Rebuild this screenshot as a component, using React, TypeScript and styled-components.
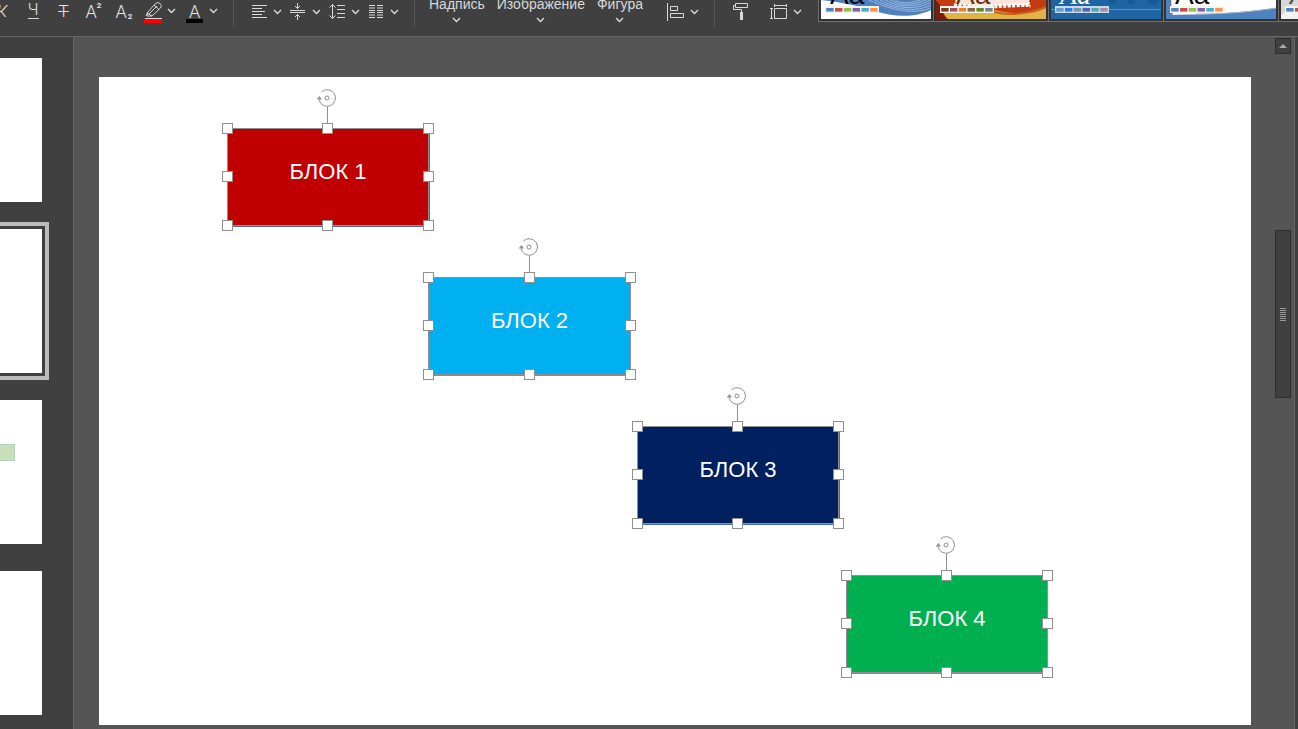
import React from "react";
import styled, { createGlobalStyle } from "styled-components";

const GlobalStyle = createGlobalStyle`
  * { box-sizing: border-box; }
  body {
    margin: 0;
    background: #555555;
    font-family: "Liberation Sans", Arial, sans-serif;
  }
  button { font: inherit; color: inherit; border: 0; padding: 0; background: none; }
`;

const Window = styled.div`
  display: flex;
  flex-direction: column;
  min-height: 100vh;
  overflow: hidden;
`;

const Toolbar = styled.header`
  display: flex;
  align-items: flex-end;
  height: 37px;
  overflow: hidden;
  background: #404040;
  border-bottom: 1px solid #666666;
  color: #d9d9d9;
`;

const Group = styled.div<{ $pad?: string }>`
  display: flex;
  flex: none;
  align-items: flex-end;
  padding: ${(p) => p.$pad ?? "0"};
  margin-bottom: 10px;
`;

const Tool = styled.button<{ $w: number }>`
  display: flex;
  justify-content: flex-end;
  flex: none;
  width: ${(p) => p.$w}px;
  height: 26px;
  svg { display: block; flex: none; }
`;

const Separator = styled.span`
  flex: none;
  width: 1px;
  height: 27px;
  margin-bottom: 9px;
  background: #555555;
`;

const MenuButton = styled.button`
  display: flex;
  flex-direction: column;
  align-items: center;
  gap: 5px;
  height: 30px;
  padding: 0 6px;
  font-size: 14px;
  line-height: 16px;
  svg { display: block; }
`;

const Gallery = styled.div`
  display: flex;
  flex: 1;
  min-width: 0;
  overflow: hidden;
  height: 60px;
  margin-bottom: 14px;
  margin-left: 14px;
  border-bottom: 1px solid #6e6e6e;
`;

const ThemeButton = styled.button`
  flex: none;
  width: 115px;
  padding: 0 2px 2px;
  border-left: 1px solid #6e6e6e;
  background: #333333;
  display: flex;
  align-items: flex-end;
  svg { display: block; }
`;

const Body = styled.div`
  display: flex;
  flex: 1;
`;

const SlidePanel = styled.nav`
  display: flex;
  flex-direction: column;
  flex: none;
  gap: 27px;
  width: 74px;
  padding: 21px 31px 14px 0;
  overflow: hidden;
  background: #404040;
  border-right: 1px solid #666666;
`;

const SlideThumb = styled.button<{ $selected?: boolean }>`
  display: flex;
  align-items: flex-start;
  height: 144px;
  background: #ffffff;
  outline: ${(p) => (p.$selected ? "4px solid #bbbbbb" : "none")};
  outline-offset: 3px;
`;

const ThumbShape = styled.span`
  width: 15px;
  height: 17px;
  margin-top: 44px;
  background: #c8e0b8;
  border: 1px solid #b2d0bd;
  border-left: 0;
`;

const Workspace = styled.main`
  flex: 1;
  min-width: 0;
  padding: 40px 24px 4px 25px;
`;

const Slide = styled.section`
  position: relative;
  width: 100%;
  aspect-ratio: 16 / 9;
  background: #ffffff;
`;

const Block = styled.div<{ $x: number; $y: number; $w: number; $fill: string; $edge: string }>`
  position: absolute;
  left: ${(p) => p.$x}px;
  top: ${(p) => p.$y}px;
  width: ${(p) => p.$w}px;
  height: 98px;
  padding-top: 30px;
  background: ${(p) => p.$fill};
  border: 1px solid #8f8f8f;
  box-shadow: ${(p) => p.$edge};
  color: #ffffff;
  font-size: 22px;
  line-height: 26px;
  text-align: center;
`;

const Handle = styled.span<{ $left: number; $top: number }>`
  position: absolute;
  left: ${(p) => p.$left}px;
  top: ${(p) => p.$top}px;
  width: 11px;
  height: 11px;
  margin: -6px 0 0 -6px;
  background: #ffffff;
  border: 1px solid #8f8f8f;
`;

const Rotator = styled.svg<{ $left: number }>`
  position: absolute;
  left: ${(p) => p.$left}px;
  top: -40px;
`;

const ScrollColumn = styled.aside`
  display: flex;
  flex-direction: column;
  flex: none;
  width: 20px;
  padding-top: 1px;
  border-right: 1px solid #666666;
`;

const ScrollArrow = styled.button`
  display: flex;
  align-items: center;
  justify-content: center;
  width: 16px;
  height: 16px;
  background: #404040;
  border: 1px solid #2d2d2d;
`;

const ScrollThumb = styled.div`
  display: flex;
  flex-direction: column;
  align-items: center;
  justify-content: center;
  gap: 1px;
  width: 16px;
  height: 168px;
  margin-top: 176px;
  background: #404040;
  border: 1px solid #2d2d2d;
`;

const Grip = styled.span`
  width: 6px;
  height: 1px;
  background: #999999;
`;

const RightEdge = styled.div`
  flex: none;
  width: 3px;
  background: #404040;
`;

const Chevron = ({ x, y = 12 }: { x: number; y?: number }) => (
  <path d={`M${x - 3.5} ${y - 2}l3.5 3.5l3.5 -3.5`} strokeWidth="1.4" />
);

type IconProps = { w: number; children: React.ReactNode };
const Icon = ({ w, children }: IconProps) => (
  <svg width={w} height="26" viewBox={`0 0 ${w} 26`} fill="none" stroke="#d9d9d9" aria-hidden="true">
    {children}
  </svg>
);

type GlyphProps = { x: number; y?: number; size?: number; bold?: boolean; italic?: boolean; children: string };
const Glyph = ({ x, y = 17, size = 17, bold, italic, children }: GlyphProps) => (
  <text
    x={x}
    y={y}
    fill="#e6e6e6"
    stroke="none"
    textAnchor="middle"
    fontFamily='Roboto, "Noto Sans", sans-serif'
    fontWeight={bold ? 700 : 300}
    fontStyle={italic ? "italic" : "normal"}
    fontSize={size}
  >
    {children}
  </text>
);

const MenuChevron = () => (
  <svg width="9" height="6" viewBox="0 0 9 6" fill="none" stroke="#d9d9d9" aria-hidden="true">
    <path d="M1 1l3.5 3.5l3.5 -3.5" strokeWidth="1.4" />
  </svg>
);

const Swatches = ({ colors, back = "#f4f4f4" }: { colors: string[]; back?: string }) => (
  <g>
    <rect x="4" y="27" width="54" height="7" fill={back} />
    {colors.map((c, i) => (
      <rect key={c} x={5.2 + i * 8.8} y="29" width="7.4" height="3.6" fill={c} />
    ))}
  </g>
);

const office = ["#4f81bd", "#c0504d", "#9bbb59", "#8064a2", "#4bacc6", "#f79646"];

const ThemeArt = ({ children }: { children: React.ReactNode }) => (
  <svg width="110" height="40" viewBox="0 0 110 40" aria-hidden="true">
    {children}
  </svg>
);

const WaveTheme = () => (
  <ThemeArt>
    <rect width="110" height="40" fill="#ffffff" />
    <path d="M0 0H110V31C94 39 72 38 54 32C32 25 16 23 0 21Z" fill="#4f81bd" />
    <g stroke="#b9cde5" strokeWidth="0.7" fill="none">
      {[0, 2, 4, 6, 8, 10].map((d) => (
        <path key={d} d={`M${48 + d * 2} ${21 - d / 2}C${66 + d} ${29 - d / 3} ${90} ${37 - d} 110 ${29 - d * 1.3}`} />
      ))}
    </g>
    <text x="9" y="25" fontSize="28" fontFamily="Liberation Sans, sans-serif" fill="#000000">Aa</text>
    <Swatches colors={office} />
  </ThemeArt>
);

const AutumnTheme = () => (
  <ThemeArt>
    <rect width="110" height="40" rx="2" fill="#c23b12" />
    <path d="M0 40L8 33C26 36 34 28 52 30C78 35 92 37 110 29V40Z" fill="#dfb345" />
    <path d="M14 0H93V27C72 24 56 30 20 25Z" fill="#fbe3dc" />
    <path d="M18 26C42 30 66 26 92 26" fill="none" stroke="#ffffff" strokeWidth="4" strokeDasharray="3 1.5" />
    <path d="M92 20L94 29" fill="none" stroke="#ffffff" strokeWidth="2" strokeDasharray="2 1" />
    <path d="M58 33C76 37 92 35 110 28" fill="none" stroke="#c8611a" strokeWidth="2" />
    <path d="M0 22C5 24 6 36 12 40H0Z" fill="#7c1c0b" />
    <text x="20" y="25" fontSize="28" fontFamily="Liberation Sans, sans-serif" fill="#6a3008">Aa</text>
    <Swatches colors={["#7b3f0e", "#9f5058", "#e68422", "#846648", "#63891f", "#758085"]} />
  </ThemeArt>
);

const OceanTheme = () => (
  <ThemeArt>
    <rect width="110" height="40" fill="#1f64a3" />
    <g fill="#195a96">
      <circle cx="62" cy="22" r="4" />
      <circle cx="80" cy="21" r="4" />
      <circle cx="102" cy="20" r="6" />
    </g>
    <path d="M0 30.5H110" stroke="#5e91bf" />
    <text x="9" y="25" fontSize="28" fontStyle="italic" fontFamily="Liberation Serif, serif" fill="#ffffff">Aa</text>
    <Swatches back="#c5d9eb" colors={["#629dd1", "#297fd5", "#7f8fa9", "#4a66ac", "#5aa2ae", "#9d90a0"]} />
  </ThemeArt>
);

const HillTheme = () => (
  <ThemeArt>
    <rect width="110" height="40" fill="#ffffff" />
    <path d="M0 0H9C5 12 4 23 7 35L0 40Z" fill="#4f81bd" />
    <path d="M0 40V36C38 36 74 34 110 29V40Z" fill="#4f81bd" />
    <path d="M30 35C60 35 86 33 110 29" fill="none" stroke="#95b3d7" />
    <text x="9" y="25" fontSize="28" fontFamily="Liberation Sans, sans-serif" fill="#000000">Aa</text>
    <Swatches colors={office} />
  </ThemeArt>
);

const GreyTheme = () => (
  <ThemeArt>
    <rect width="110" height="40" fill="#d8d8d8" />
    <path d="M0 36L22 24V40H0Z" fill="#f3f3f3" />
    <text x="9" y="25" fontSize="28" fontStyle="italic" fontFamily="Liberation Sans, sans-serif" fill="#555555">Aa</text>
    <Swatches colors={office} />
  </ThemeArt>
);

const themes = [
  { name: "Волна", Art: WaveTheme },
  { name: "Осень", Art: AutumnTheme },
  { name: "Океан", Art: OceanTheme },
  { name: "Холм", Art: HillTheme },
  { name: "Серая", Art: GreyTheme },
];

const blocks = [
  { label: "БЛОК 1", x: 128, y: 51, w: 202, fill: "#c00000", edge: "1px 1px 0 #41719c" },
  { label: "БЛОК 2", x: 329, y: 200, w: 203, fill: "#00b0f0", edge: "0 1px 0 #5a9cb8" },
  { label: "БЛОК 3", x: 538, y: 349, w: 202, fill: "#002060", edge: "1px 1px 0 #41719c" },
  { label: "БЛОК 4", x: 747, y: 498, w: 202, fill: "#00b050", edge: "0 1px 0 #7d8a94" },
];

const SelectedBlock = ({ label, x, y, w, fill, edge }: (typeof blocks)[number]) => {
  const middle = Math.ceil(w / 2) - 1;
  const right = w - 1;
  const handles = [
    [0, 0], [middle, 0], [right, 0],
    [0, 48], [right, 48],
    [0, 97], [middle, 97], [right, 97],
  ];
  return (
    <Block $x={x} $y={y} $w={w} $fill={fill} $edge={edge}>
      {label}
      <Rotator $left={middle - 11} width="22" height="36" viewBox="0 0 22 36" fill="none" stroke="#8f8f8f" aria-hidden="true">
        <path d="M4.500 2.900A8.300 8.300 0 1 1 2 10.500" />
        <circle cx="10" cy="9" r="2" />
        <path d="M-.5 10.500L2.500 7L5 10.500Z" fill="#8f8f8f" stroke="none" />
        <path d="M10.500 17.500V36" />
      </Rotator>
      {handles.map(([left, top]) => (
        <Handle key={`${left}-${top}`} $left={left} $top={top} />
      ))}
    </Block>
  );
};

export default function App() {
  return (
    <Window>
      <GlobalStyle />
      <Toolbar>
        <Group>
          <Tool $w={18} aria-label="Курсив">
            <Icon w={18}><Glyph x={2} italic>К</Glyph></Icon>
          </Tool>
          <Tool $w={30} aria-label="Подчёркнутый">
            <Icon w={30}>
              <Glyph x={15} y={15} size={16}>Ч</Glyph>
              <path d="M10 18.5H21" />
            </Icon>
          </Tool>
          <Tool $w={30} aria-label="Зачёркнутый">
            <Icon w={30}>
              <Glyph x={15.5}>Т</Glyph>
              <path d="M10 11.5H21" />
            </Icon>
          </Tool>
          <Tool $w={30} aria-label="Надстрочный">
            <Icon w={30}>
              <Glyph x={13} y={18} size={18}>A</Glyph>
              <Glyph x={21} y={8} size={8} bold>2</Glyph>
            </Icon>
          </Tool>
          <Tool $w={30} aria-label="Подстрочный">
            <Icon w={30}>
              <Glyph x={13} y={18} size={18}>A</Glyph>
              <Glyph x={22} y={19} size={8} bold>2</Glyph>
            </Icon>
          </Tool>
          <Tool $w={42} aria-label="Цвет выделения">
            <Icon w={42}>
              <path d="M9 13L17.500 3.500Q20 1.500 22 3.500Q24.500 5.500 22.500 8L14 16H9ZM9 13L14 16M16 5L21 9.500M11 14L19 6M8 16L10 13" />
              <path d="M7 18.500H24" />
              <rect x="6" y="19" width="18" height="4" fill="#ff0000" stroke="none" />
              <Chevron x={33.5} y={11} />
            </Icon>
          </Tool>
          <Tool $w={42} aria-label="Цвет шрифта">
            <Icon w={42}>
              <Glyph x={14.5} y={18} size={18}>A</Glyph>
              <rect x="6" y="19" width="17" height="4" fill="#000000" stroke="none" />
              <Chevron x={33.5} y={11} />
            </Icon>
          </Tool>
        </Group>
        <Group $pad="0 0 0 11px" />
        <Separator />
        <Group $pad="0 12px">
          <Tool $w={39} aria-label="Выравнивание текста">
            <Icon w={39}>
              <path d="M6 5.500H21M6 8.500H16M6 11.500H19M6 14.500H16M6 17.500H21" />
              <Chevron x={31.5} />
            </Icon>
          </Tool>
          <Tool $w={39} aria-label="Вертикальное выравнивание">
            <Icon w={39}>
              <path d="M5 10.500H20M5 12.500H20M12.500 3V9M12.500 14V20M10 6L12.500 8.500L15 6M10 17L12.500 14.500L15 17" />
              <Chevron x={31.5} />
            </Icon>
          </Tool>
          <Tool $w={39} aria-label="Междустрочный интервал">
            <Icon w={39}>
              <path d="M8.500 4.500V18.500M5.500 7.500L8.500 4.500L11.500 7.500M5.500 15.500L8.500 18.500L11.500 15.500M13 5.500H21M13 9.500H21M13 13.500H21M13 17.500H21" />
              <Chevron x={31.5} />
            </Icon>
          </Tool>
          <Tool $w={39} aria-label="Колонки">
            <Icon w={39}>
              <path d="M6 5.500H12M6 8H12M6 10.500H12M6 12.500H12M6 15H12M6 17.500H12M14 5.500H20M14 8H20M14 10.500H20M14 12.500H20M14 15H20M14 17.500H20" />
              <Chevron x={31.5} />
            </Icon>
          </Tool>
        </Group>
        <Separator />
        <Group $pad="0 12px 0 8px">
          <MenuButton>Надпись<MenuChevron /></MenuButton>
          <MenuButton>Изображение<MenuChevron /></MenuButton>
          <MenuButton>Фигура<MenuChevron /></MenuButton>
        </Group>
        <Group $pad="0 11px 0 0">
          <Tool $w={42} aria-label="Выравнивание фигур">
            <Icon w={42}>
              <path d="M6.500 3V21M9.500 6.500H16.500V10.500H9.500ZM9.500 13.500H22.500V17.500H9.500Z" />
              <Chevron x={33.5} />
            </Icon>
          </Tool>
        </Group>
        <Separator />
        <Group $pad="0 0 0 11px">
          <Tool $w={36} aria-label="Копировать стиль">
            <Icon w={36}>
              <path d="M9.500 3.500H21.500V7.500H9.500ZM9.500 5.500H7.500V9.500H15.500V12" />
              <rect x="14" y="12" width="3" height="8" fill="#d9d9d9" stroke="none" />
            </Icon>
          </Tool>
          <Tool $w={42} aria-label="Размер слайда">
            <Icon w={42}>
              <path d="M12.500 8.500H24.500V18.500H12.500ZM12 5.500H25M12.500 4V7M24.500 4V7M9.500 8V19M8 8.500H11M8 18.500H11" />
              <Chevron x={35.5} />
            </Icon>
          </Tool>
        </Group>
        <Gallery>
          {themes.map(({ name, Art }) => (
            <ThemeButton key={name} aria-label={name}><Art /></ThemeButton>
          ))}
        </Gallery>
      </Toolbar>
      <Body>
        <SlidePanel aria-label="Слайды">
          <SlideThumb aria-label="Слайд 1" />
          <SlideThumb aria-label="Слайд 2" $selected />
          <SlideThumb aria-label="Слайд 3"><ThumbShape /></SlideThumb>
          <SlideThumb aria-label="Слайд 4" />
        </SlidePanel>
        <Workspace>
          <Slide>
            {blocks.map((b) => <SelectedBlock key={b.label} {...b} />)}
          </Slide>
        </Workspace>
        <ScrollColumn>
          <ScrollArrow aria-label="Прокрутить вверх">
            <svg width="8" height="4" viewBox="0 0 8 4" aria-hidden="true"><path d="M4 0L8 4H0Z" fill="#aaaaaa" /></svg>
          </ScrollArrow>
          <ScrollThumb>
            {[0, 1, 2, 3, 4, 5, 6].map((n) => <Grip key={n} />)}
          </ScrollThumb>
        </ScrollColumn>
        <RightEdge />
      </Body>
    </Window>
  );
}
